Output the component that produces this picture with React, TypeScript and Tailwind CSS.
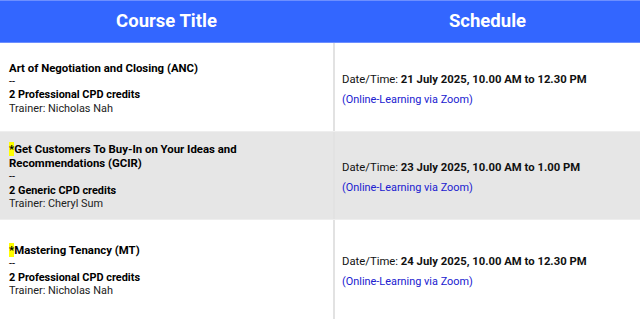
import React from "react";

const rows = [
  {
    title: "Art of Negotiation and Closing (ANC)",
    star: false,
    credits: "2 Professional CPD credits",
    trainer: "Trainer: Nicholas Nah",
    date: "21 July 2025, 10.00 AM to 12.30 PM",
    bg: "bg-white",
    h: "h-[88px]",
  },
  {
    title: "Get Customers To Buy-In on Your Ideas and Recommendations (GCIR)",
    star: true,
    credits: "2 Generic CPD credits",
    trainer: "Trainer: Cheryl Sum",
    date: "23 July 2025, 10.00 AM to 1.00 PM",
    bg: "bg-[#e6e6e6]",
    h: "h-[88px]",
  },
  {
    title: "Mastering Tenancy (MT)",
    star: true,
    credits: "2 Professional CPD credits",
    trainer: "Trainer: Nicholas Nah",
    date: "24 July 2025, 10.00 AM to 12.30 PM",
    bg: "bg-white",
    h: "h-[100px]",
  },
];

export default function App() {
  return (
    <div
      className="w-[640px] h-[320px] overflow-hidden bg-white text-black"
      style={{ fontFamily: "Roboto, 'Liberation Sans', sans-serif" }}
    >
      <div className="grid grid-cols-[333px_2px_305px] h-[43px] bg-[#3366ff] border-t border-[#6d8fff] border-b border-b-[#6d8fff]">
        <div className="flex items-center justify-center text-white font-bold text-[18.5px]">
          Course Title
        </div>
        <div />
        <div className="flex items-center justify-center text-white font-bold text-[18.5px]">
          Schedule
        </div>
      </div>
      {rows.map((r, i) => (
        <div
          key={i}
          className={`grid grid-cols-[333px_2px_305px] ${r.h} ${r.bg} ${i > 0 ? "border-t border-[#eeeeee]" : ""}`}
        >
          <div className="flex flex-col justify-center pl-[9px] pr-[70px] pt-[2px] text-[10.9px] leading-[13.5px]">
            <div className="font-bold text-[11.4px] leading-[14px]">
              {r.star && <span className="bg-[#ffff00]">*</span>}
              {r.title}
            </div>
            <div>--</div>
            <div className="font-bold">{r.credits}</div>
            <div className="text-[#222]">{r.trainer}</div>
          </div>
          <div className="bg-[#e2e2e2]" />
          <div className="flex flex-col justify-center pl-[7px] pt-[5px]">
            <div className="text-[11.3px] leading-[16px] text-[#111]">
              Date/Time: <span className="font-bold">{r.date}</span>
            </div>
            <div className="text-[10.9px] leading-[16px] mt-[4px] text-[#2020d0]">
              (Online-Learning via Zoom)
            </div>
          </div>
        </div>
      ))}
    </div>
  );
}
